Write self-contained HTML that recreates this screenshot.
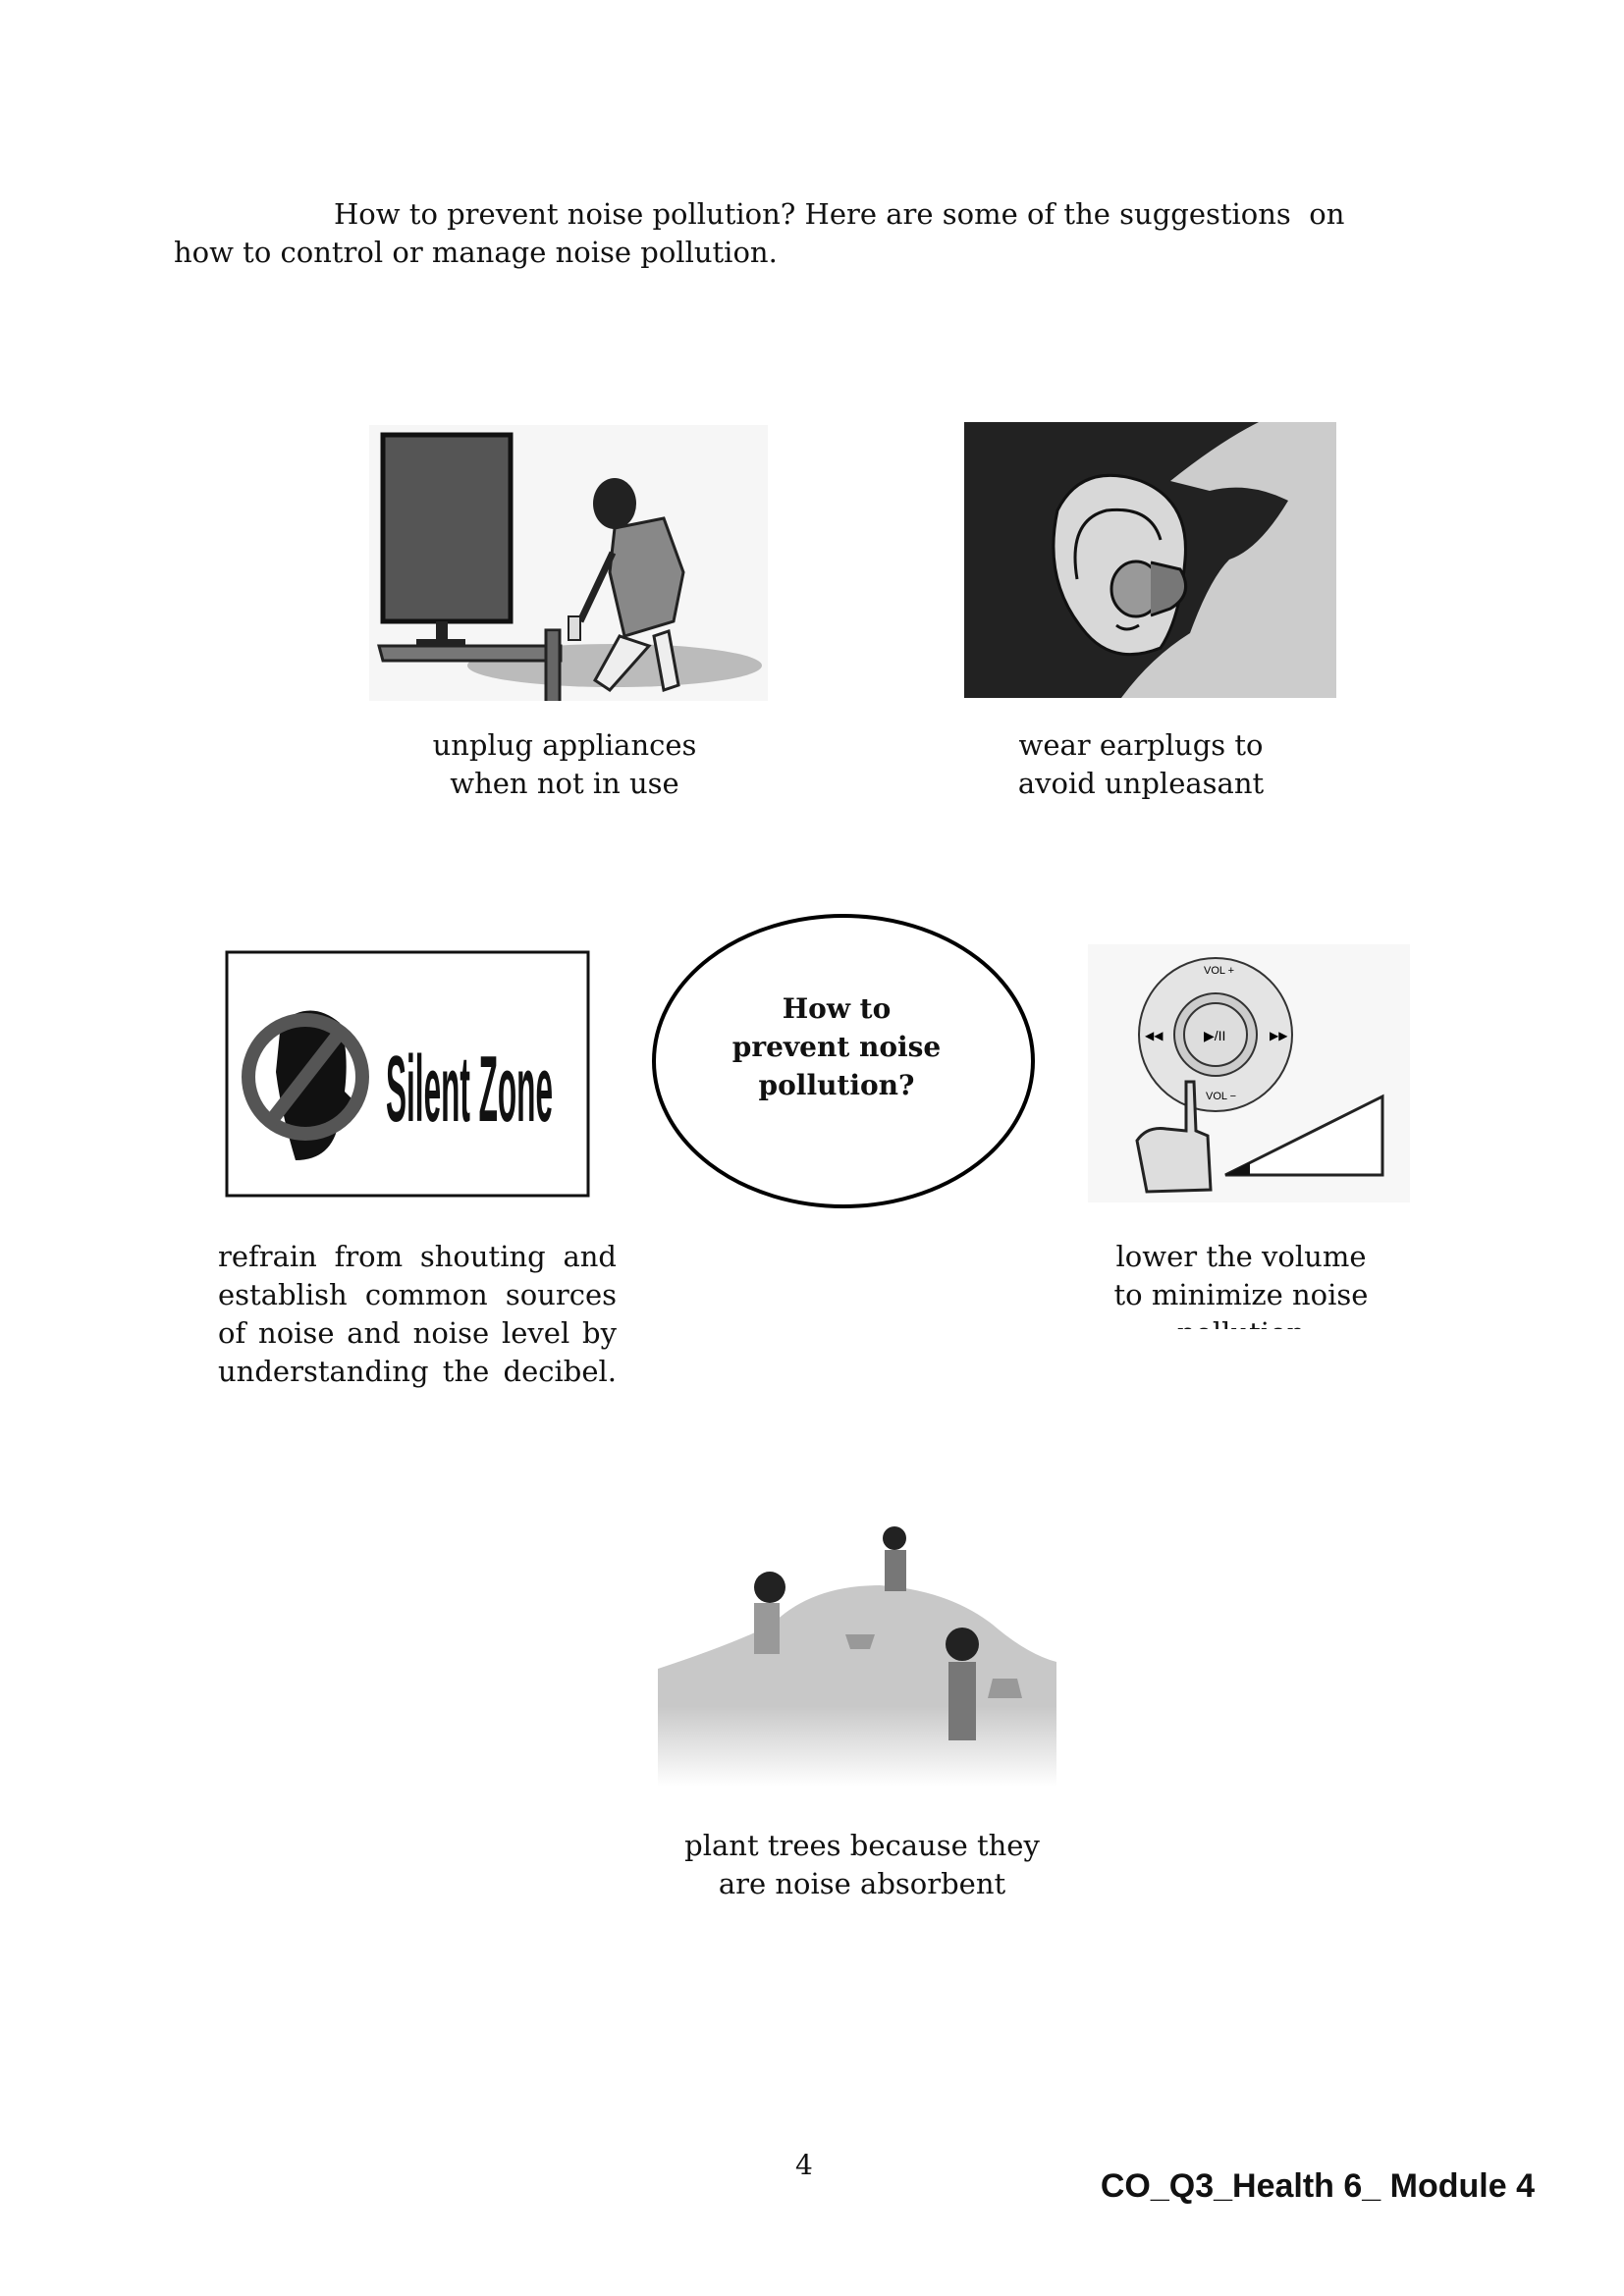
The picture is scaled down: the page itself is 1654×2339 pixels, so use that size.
<!DOCTYPE html>
<html><head><meta charset="utf-8"><style>
body{margin:0;width:1654px;height:2339px;background:#fff;position:relative;overflow:hidden;font-family:"DejaVu Serif",serif;color:#111}
.t{position:absolute;font-size:29px;line-height:39px;white-space:nowrap}
.c{text-align:center}
.j{text-align:justify;text-align-last:justify;width:406px;white-space:normal;position:absolute;left:222px;font-size:29px;line-height:39px}
svg{position:absolute}
</style></head><body>
<div class="t" style="left:340px;top:199px">How to prevent noise pollution? Here are some of the suggestions&nbsp; on</div>
<div class="t" style="left:177px;top:238px">how to control or manage noise pollution.</div>

<svg style="left:376px;top:433px" width="406" height="281" viewBox="0 0 406 281">
<rect width="406" height="281" fill="#f6f6f6"/>
<ellipse cx="250" cy="245" rx="150" ry="22" fill="#bbb"/>
<rect x="14" y="10" width="130" height="190" fill="#555" stroke="#111" stroke-width="5"/>
<rect x="68" y="200" width="12" height="20" fill="#222"/><rect x="48" y="218" width="50" height="8" fill="#222"/>
<polygon points="10,225 195,225 195,240 14,240" fill="#777" stroke="#222" stroke-width="3"/>
<rect x="180" y="232" width="14" height="220" fill="#666" stroke="#222" stroke-width="3" transform="scale(1,0.9)"/>
<rect x="26" y="343" width="150" height="8" fill="#666" stroke="#222" stroke-width="2" transform="scale(1,0.9)"/>
<rect x="30" y="400" width="145" height="10" fill="#666" stroke="#222" stroke-width="2" transform="scale(1,0.9)"/>
<ellipse cx="250" cy="80" rx="22" ry="26" fill="#222"/>
<path d="M250 105 L300 95 L320 150 L310 200 L260 215 L245 150 Z" fill="#888" stroke="#222" stroke-width="3"/>
<path d="M255 215 L230 260 L245 270 L285 225 Z" fill="#eee" stroke="#222" stroke-width="3"/>
<path d="M290 215 L300 270 L315 265 L305 210 Z" fill="#eee" stroke="#222" stroke-width="3"/>
<path d="M248 130 L215 200" stroke="#222" stroke-width="7"/>
<rect x="203" y="195" width="12" height="24" fill="#ddd" stroke="#222" stroke-width="2"/>
</svg>
<div class="t c" style="left:375px;width:400px;top:740px">unplug appliances<br>when not in use</div>

<svg style="left:982px;top:430px" width="379" height="281" viewBox="0 0 379 281">
<rect width="379" height="281" fill="#222"/>
<path d="M210 60 Q260 20 300 0 L379 0 L379 281 L160 281 Q190 240 230 215 Q250 160 270 140 Q300 130 330 80 Q290 60 250 70 Z" fill="#ccc"/>
<path d="M95 90 Q120 40 180 60 Q230 80 225 140 Q220 200 200 230 Q150 250 120 210 Q80 160 95 90 Z" fill="#d8d8d8" stroke="#111" stroke-width="3"/>
<path d="M115 160 Q105 100 145 90 Q190 85 200 120" fill="none" stroke="#111" stroke-width="3"/>
<ellipse cx="175" cy="170" rx="25" ry="28" fill="#999" stroke="#111" stroke-width="3"/>
<path d="M190 143 L220 150 Q235 175 210 190 L190 197" fill="#777" stroke="#111" stroke-width="3"/>
<path d="M155 207 Q165 215 178 207" fill="none" stroke="#111" stroke-width="3"/>
</svg>
<div class="t c" style="left:962px;width:400px;top:740px">wear earplugs to<br>avoid unpleasant</div>

<svg style="left:226px;top:962px" width="385" height="265" viewBox="0 0 385 265">
<rect x="5" y="8" width="368" height="248" fill="#fff" stroke="#111" stroke-width="3"/>
<path d="M60 80 Q90 55 120 80 Q130 110 125 150 L135 160 L120 175 Q115 220 75 220 Q60 170 55 130 Z" fill="#111"/>
<circle cx="85" cy="135" r="58" fill="none" stroke="#555" stroke-width="14"/>
<line x1="50" y1="180" x2="120" y2="90" stroke="#555" stroke-width="14"/>
<text x="167" y="180" font-family="Liberation Sans Narrow,Liberation Sans,sans-serif" font-weight="bold" font-size="96" fill="#111" textLength="170" lengthAdjust="spacingAndGlyphs">Silent Zone</text>
</svg>

<svg style="left:660px;top:928px" width="398" height="306"><ellipse cx="199" cy="153" rx="193" ry="148" fill="#fff" stroke="#000" stroke-width="4"/></svg>
<div class="t c" style="left:652px;width:400px;top:1008px;font-weight:bold;font-size:28px">How to<br>prevent noise<br>pollution?</div>

<svg style="left:1108px;top:962px" width="328" height="263" viewBox="0 0 328 263">
<rect width="328" height="263" fill="#f7f7f7"/>
<circle cx="130" cy="92" r="78" fill="#e4e4e4" stroke="#333" stroke-width="2"/>
<circle cx="130" cy="92" r="42" fill="#ccc" stroke="#333" stroke-width="2"/>
<circle cx="130" cy="92" r="32" fill="#ddd" stroke="#333" stroke-width="2"/>
<text x="118" y="98" font-size="14" font-family="Liberation Sans,sans-serif">▶/II</text>
<text x="118" y="30" font-size="11" font-family="Liberation Sans,sans-serif">VOL +</text>
<text x="120" y="158" font-size="11" font-family="Liberation Sans,sans-serif">VOL −</text>
<text x="58" y="97" font-size="12">◀◀</text><text x="185" y="97" font-size="12">▶▶</text>
<path d="M100 140 L108 140 L110 190 L122 195 L125 250 L60 252 L50 200 Q60 185 80 188 L100 190 Z" fill="#ddd" stroke="#222" stroke-width="3"/>
<polygon points="140,235 300,155 300,235" fill="#fff" stroke="#222" stroke-width="3"/>
<polygon points="140,235 165,222 165,235" fill="#111"/>
</svg>

<div class="j" style="top:1261px">refrain from shouting and</div>
<div class="j" style="top:1300px">establish common sources</div>
<div class="j" style="top:1339px">of noise and noise level by</div>
<div class="j" style="top:1378px">understanding the decibel.</div>
<div class="t c" style="left:1064px;width:400px;top:1261px">lower the volume<br>to minimize noise</div>
<div class="t c" style="left:1064px;width:400px;top:1339px;height:15px;overflow:hidden">pollution</div>

<svg style="left:666px;top:1535px" width="410" height="285" viewBox="0 0 410 285">
<defs><linearGradient id="g" x1="0" y1="0" x2="0" y2="1"><stop offset="0.6" stop-color="#c8c8c8"/><stop offset="1" stop-color="#fff"/></linearGradient></defs>
<path d="M4 165 Q80 140 120 120 Q160 80 230 80 Q300 85 345 120 Q380 150 410 158 L410 285 L4 285 Z" fill="url(#g)"/>
<circle cx="118" cy="82" r="16" fill="#222"/><rect x="102" y="98" width="26" height="52" fill="#999"/>
<circle cx="245" cy="32" r="12" fill="#222"/><rect x="235" y="44" width="22" height="42" fill="#777"/>
<circle cx="314" cy="140" r="17" fill="#222"/><rect x="300" y="158" width="28" height="80" fill="#777"/>
<path d="M195 130 L225 130 L220 145 L200 145 Z" fill="#999"/>
<path d="M345 175 L370 175 L375 195 L340 195 Z" fill="#999"/>
</svg>
<div class="t c" style="left:678px;width:400px;top:1861px">plant trees because they<br>are noise absorbent</div>

<div class="t" style="left:810px;top:2186px;font-size:28px">4</div>
<div style="position:absolute;right:91px;top:2208px;font-family:'Liberation Sans',sans-serif;font-weight:bold;font-size:34px;white-space:nowrap">CO_Q3_Health 6_ Module 4</div>
</body></html>
